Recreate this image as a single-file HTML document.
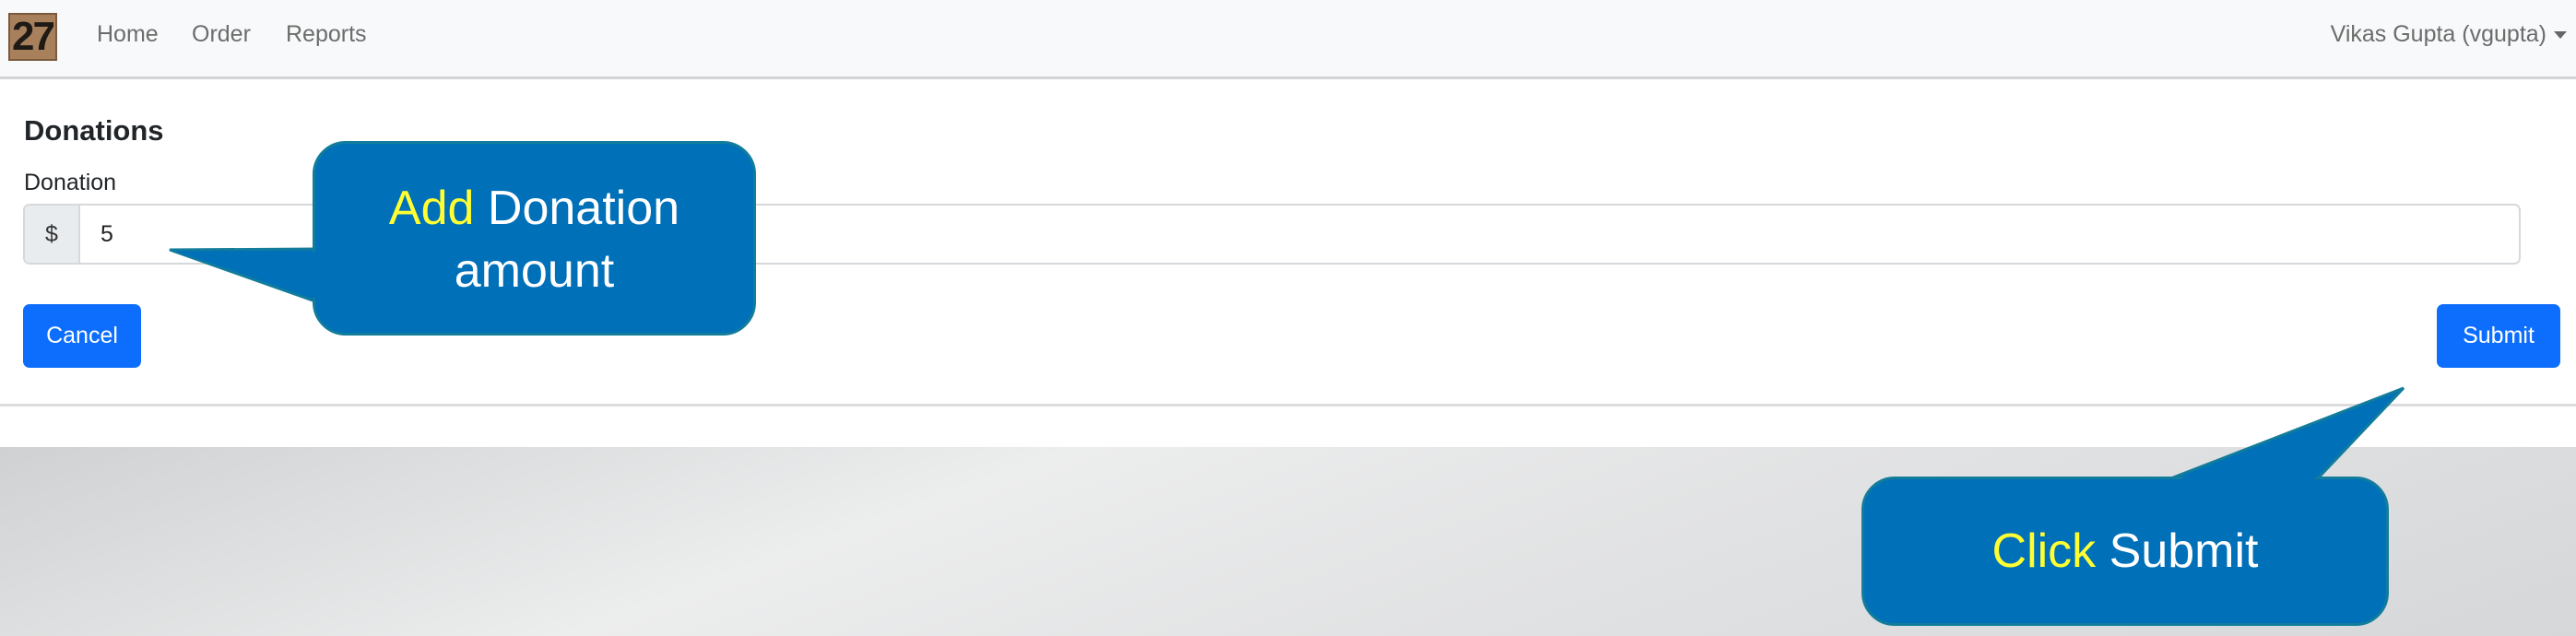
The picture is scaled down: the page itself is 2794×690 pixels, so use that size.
<!DOCTYPE html>
<html><head><meta charset="utf-8"><style>
*{margin:0;padding:0;box-sizing:border-box}
body{width:2794px;height:690px;overflow:hidden;position:relative;font-family:"Liberation Sans",sans-serif;background:#fff}
.nav{position:absolute;left:0;top:0;width:2794px;height:86px;background:#f8f9fa;border-bottom:3px solid #d4d4d4}
.logo{position:absolute;left:9px;top:14px;width:53px;height:52px;background:#a8805c;border:2px solid #7a5a3e;font:bold 44px "Liberation Sans Narrow","Liberation Sans",sans-serif;color:#1e1a16;text-align:center;line-height:48px;letter-spacing:-2px}
.nl{position:absolute;top:23px;font-size:25px;color:#6c6c6c}
.card-b{position:absolute;left:0;top:438px;width:2794px;height:3px;background:#dcdcdc}
.bg{position:absolute;left:0;top:485px;width:2794px;height:205px;background:linear-gradient(160deg,#cfd1d3 0%,#eceded 35%,#e2e3e4 60%,#d5d7d9 100%)}
.t{position:absolute;color:#212529}
.ig{position:absolute;left:25px;top:221px;width:2709px;height:66px;border:2px solid #d6d9dc;border-radius:7px;background:#fff}
.add{position:absolute;left:0;top:0;width:60px;height:62px;background:#e9ecef;border-right:2px solid #d6d9dc;border-radius:6px 0 0 6px;font-size:25px;text-align:center;line-height:62px;color:#333}
.btn{position:absolute;top:330px;height:69px;background:#0d6efd;color:#fff;border-radius:7px;font-size:25px;text-align:center;line-height:69px}
.call{position:absolute;background:#0070b9;border:3px solid #127c9c;border-radius:36px;color:#fff;text-align:center;font-size:52px;font-family:"Liberation Sans Narrow","Liberation Sans",sans-serif}
.y{color:#ffff33}
</style></head><body>
<div class="nav">
<div class="logo">27</div>
<div class="nl" style="left:105px">Home</div>
<div class="nl" style="left:208px">Order</div>
<div class="nl" style="left:310px">Reports</div>
<div class="nl" style="left:2512px;width:250px;text-align:right">Vikas Gupta (vgupta)</div>
<div style="position:absolute;left:2770px;top:34px;border-left:7px solid transparent;border-right:7px solid transparent;border-top:8px solid #666;"></div>
</div>
<div class="t" style="left:26px;top:124px;font-size:31px;font-weight:bold">Donations</div>
<div class="t" style="left:26px;top:184px;font-size:25px">Donation</div>
<div class="ig"><div class="add">$</div><div style="position:absolute;left:82px;top:0;line-height:62px;font-size:25px;color:#222">5</div></div>
<div class="btn" style="left:25px;width:128px">Cancel</div>
<div class="btn" style="left:2643px;width:134px">Submit</div>
<div class="card-b"></div>
<div class="bg"></div>
<svg style="position:absolute;left:0;top:0" width="2794" height="690">
<polygon points="184,271 345,270 345,328" fill="#0070b9" stroke="#127c9c" stroke-width="3"/>
<polygon points="2607,421 2352,520 2513,520" fill="#0070b9" stroke="#127c9c" stroke-width="3"/>
</svg>
<div class="call" style="left:339px;top:153px;width:481px;height:211px;padding-top:36px;line-height:68px"><span class="y">Add</span> Donation<br>amount</div>
<div class="call" style="left:2019px;top:517px;width:572px;height:162px;line-height:156px"><span class="y">Click</span> Submit</div>
<svg style="position:absolute;left:0;top:0" width="2794" height="690">
<polygon points="190,273 348,273 348,325" fill="#0070b9"/>
<polygon points="2600,425 2360,522 2508,522" fill="#0070b9"/>
</svg>
</body></html>
